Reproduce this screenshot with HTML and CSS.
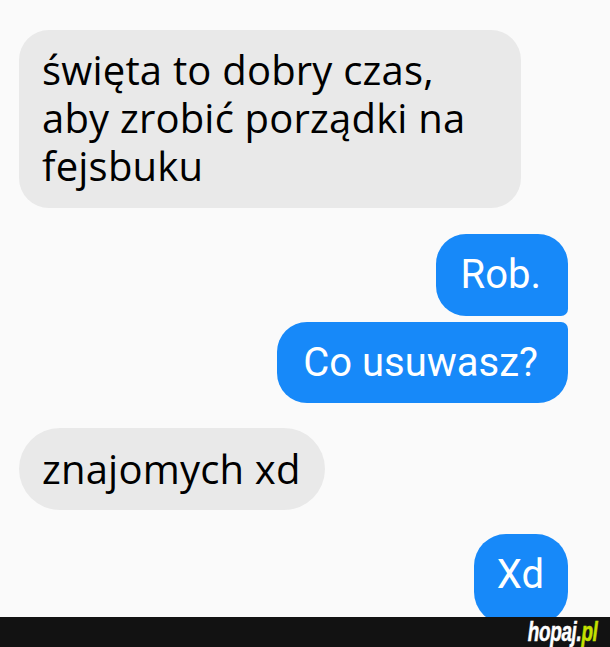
FILE: index.html
```html
<!DOCTYPE html>
<html lang="pl">
<head>
<meta charset="utf-8">
<title>Czat</title>
<link rel="stylesheet" href="styles.css">
</head>
<body>
<main class="chat">
  <div class="bubble in big">święta to dobry czas,<br>aby zrobić porządki na<br>fejsbuku</div>
  <div class="bubble out first">Rob.</div>
  <div class="bubble out last">Co usuwasz?</div>
  <div class="bubble in single">znajomych xd</div>
  <div class="bubble out xd">Xd</div>
</main>
<footer class="bar">
  <span class="logo">hopaj.<span class="pl">pl</span></span>
</footer>
</body>
</html>
```

FILE: styles.css
```css
* { box-sizing: border-box; }
html, body { margin: 0; padding: 0; }
body {
  width: 610px;
  height: 647px;
  overflow: hidden;
  background: #fafafa;
}
.chat {
  height: 617px;
  overflow: hidden;
  display: flex;
  flex-direction: column;
  padding: 30px 42px 0 19px;
}
.bubble {
  border-radius: 30px;
}
.in {
  align-self: flex-start;
  background: #e9e9e9;
  color: #000;
  font-family: "Open Sans", sans-serif;
  font-size: 40px;
  letter-spacing: 0.2px;
}
.out {
  align-self: flex-end;
  background: #1789f9;
  color: #fff;
  font-family: Roboto, sans-serif;
  font-size: 40px;
  height: 82px;
  line-height: 82px;
  padding: 0 27px 0 25px;
}
.big {
  width: 502px;
  line-height: 48px;
  padding: 16px 20px 18px 23px;
  margin-bottom: 26px;
}
.first {
  border-bottom-right-radius: 7px;
  margin-bottom: 6px;
}
.last {
  height: 81px;
  line-height: 81px;
  padding: 0 30px 0 26px;
  border-top-right-radius: 7px;
  margin-bottom: 25px;
}
.single {
  height: 82px;
  line-height: 82px;
  padding: 0 24px 0 23px;
  border-radius: 41px;
  margin-bottom: 24px;
}
.xd {
  flex-shrink: 0;
  height: 90px;
  padding: 0 24px 0 23px;
  border-radius: 32px;
}
.bar {
  height: 30px;
  background: #121212;
  display: flex;
  justify-content: flex-end;
  align-items: center;
  padding-right: 13px;
}
.logo {
  font-family: "Liberation Sans", Arial, sans-serif;
  font-weight: bold;
  font-style: italic;
  font-size: 27px;
  color: #fff;
  letter-spacing: -0.5px;
  -webkit-text-stroke: 0.5px currentColor;
  transform: scaleX(0.7);
  transform-origin: right center;
  line-height: 1;
}
.pl { color: #c4e000; }
```
